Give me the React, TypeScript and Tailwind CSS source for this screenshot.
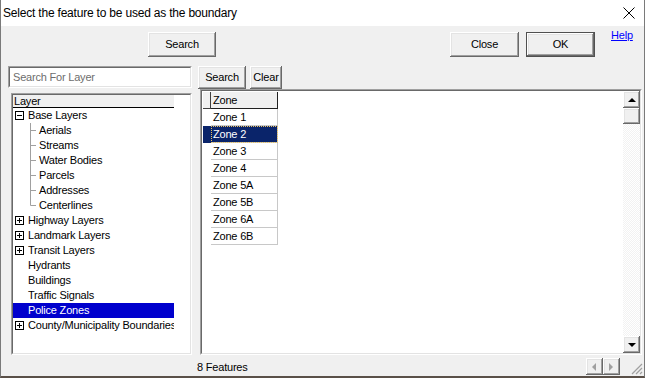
import React from 'react';

type Node = { label: string; exp?: 'plus' | 'minus'; child?: boolean; last?: boolean; selected?: boolean };

const tree: Node[] = [
  { label: 'Base Layers', exp: 'minus' },
  { label: 'Aerials', child: true },
  { label: 'Streams', child: true },
  { label: 'Water Bodies', child: true },
  { label: 'Parcels', child: true },
  { label: 'Addresses', child: true },
  { label: 'Centerlines', child: true, last: true },
  { label: 'Highway Layers', exp: 'plus' },
  { label: 'Landmark Layers', exp: 'plus' },
  { label: 'Transit Layers', exp: 'plus' },
  { label: 'Hydrants' },
  { label: 'Buildings' },
  { label: 'Traffic Signals' },
  { label: 'Police Zones', selected: true },
  { label: 'County/Municipality Boundaries', exp: 'plus' },
];

const zones = ['Zone 1', 'Zone 2', 'Zone 3', 'Zone 4', 'Zone 5A', 'Zone 5B', 'Zone 6A', 'Zone 6B'];

const raised = 'shadow-[inset_-1px_-1px_#696969,inset_1px_1px_#ffffff,inset_-2px_-2px_#a0a0a0,inset_2px_2px_#e3e3e3]';

function Button({ label, className }: { label: string; className: string }) {
  return (
    <div className={`flex items-center justify-center bg-[#f0f0f0] text-[11px] text-black ${raised} ${className}`}>
      {label}
    </div>
  );
}

function Sunken({ className, children }: { className: string; children: React.ReactNode }) {
  return (
    <div className={`border border-t-[#a0a0a0] border-l-[#a0a0a0] border-r-white border-b-white ${className}`}>
      <div className="h-full w-full border border-t-[#696969] border-l-[#696969] border-r-[#e3e3e3] border-b-[#e3e3e3] bg-white">
        {children}
      </div>
    </div>
  );
}

function Expander({ kind }: { kind: 'plus' | 'minus' }) {
  return (
    <svg width="9" height="9" viewBox="0 0 9 9" className="shrink-0">
      <rect x="0.5" y="0.5" width="8" height="8" fill="white" stroke="#000" />
      <line x1="2" y1="4.5" x2="7" y2="4.5" stroke="#000" />
      {kind === 'plus' && <line x1="4.5" y1="2" x2="4.5" y2="7" stroke="#000" />}
    </svg>
  );
}

function Arrow({ dir, color }: { dir: 'up' | 'down' | 'left' | 'right'; color: string }) {
  const pts = {
    up: '4,1 0,5 8,5',
    down: '0,1 8,1 4,5',
    left: '5,0 5,8 1,4',
    right: '1,0 1,8 5,4',
  }[dir];
  const w = dir === 'up' || dir === 'down' ? 8 : 6;
  const h = dir === 'up' || dir === 'down' ? 6 : 8;
  return (
    <svg width={w} height={h} viewBox={`0 0 ${w} ${h}`}>
      <polygon points={pts} fill={color} />
    </svg>
  );
}

export default function App() {
  return (
    <div className="flex h-[378px] w-[645px] flex-col border-x border-b-2 border-x-[#7a7a7a] border-b-[#5a5048] bg-[#f0f0f0] font-['Liberation_Sans',Arial,sans-serif] tracking-[-0.2px] text-black">
      {/* Title bar */}
      <div className="flex h-[26px] shrink-0 items-center justify-between bg-white pl-[2px] pr-[9px]">
        <span className="text-[12px]">Select the feature to be used as the boundary</span>
        <svg width="12" height="12" viewBox="0 0 12 12">
          <path d="M0.5 0.5 L11.5 11.5 M11.5 0.5 L0.5 11.5" stroke="#000" strokeWidth="1" />
        </svg>
      </div>

      {/* Top buttons */}
      <div className="flex h-[31px] shrink-0 items-start pt-[6px]">
        <Button label="Search" className="ml-[147px] h-[25px] w-[68px]" />
        <Button label="Close" className="ml-[234px] h-[25px] w-[69px]" />
        <div className="ml-[7px] h-[25px] w-[69px] border border-[#505050]">
          <Button label="OK" className="h-full w-full" />
        </div>
        <span className="-mt-[5px] ml-[16px] text-[11px] text-[#0000ff] underline">Help</span>
      </div>

      {/* Main */}
      <div className="mt-[9px] flex h-[289px] shrink-0">
        <div className="ml-[7px] flex w-[184px] flex-col">
          <Sunken className="h-[22px] w-[184px]">
            <div className="flex h-full items-center pl-[3px] text-[11px] text-[#6d6d6d]">Search For Layer</div>
          </Sunken>
          <Sunken className="ml-[3px] mt-[5px] h-[262px] w-[181px]">
            <div className="w-[161px] overflow-hidden">
              <div className="h-[13px] border-b border-black bg-[#f0f0f0] pl-[1px] text-[11px] leading-[13px]">Layer</div>
              {tree.map((n) => (
                <div
                  key={n.label}
                  className={`flex h-[15px] items-center whitespace-nowrap text-[11px] ${n.selected ? 'bg-[#0000cd] text-white' : ''}`}
                >
                  {n.exp ? (
                    <>
                      <div className="ml-[2px] mr-[4px]">
                        <Expander kind={n.exp} />
                      </div>
                      <span>{n.label}</span>
                    </>
                  ) : n.child ? (
                    <>
                      <svg width="26" height="15" viewBox="0 0 26 15" className="shrink-0">
                        <line x1="17.5" y1="0" x2="17.5" y2={n.last ? 7.5 : 15} stroke="#a0a0a0" />
                        <line x1="17.5" y1="7.5" x2="23" y2="7.5" stroke="#a0a0a0" />
                      </svg>
                      <span>{n.label}</span>
                    </>
                  ) : (
                    <span className="pl-[15px]">{n.label}</span>
                  )}
                </div>
              ))}
            </div>
          </Sunken>
        </div>

        <div className="ml-[6px] flex flex-col">
          <div className="flex h-[23px]">
            <Button label="Search" className="h-[23px] w-[48px]" />
            <Button label="Clear" className="ml-[4px] h-[23px] w-[32px]" />
          </div>
          <Sunken className="ml-[2px] h-[266px] w-[442px]">
            <div className="flex h-full">
              <div className="flex-1 pl-[1px] pt-[1px] text-[11px]">
                <div className="flex h-[17px]">
                  <div className="w-[8px] border-b border-r border-[#404040] bg-[#f0f0f0]" />
                  <div className="w-[67px] border-b border-r border-[#202020] bg-[#f0f0f0] pl-[2px] leading-[16px]">Zone</div>
                </div>
                {zones.map((z) => {
                  const sel = z === 'Zone 2';
                  return (
                    <div key={z} className="flex h-[17px]">
                      <div className={`w-[8px] ${sel ? 'bg-[#0a246a]' : 'bg-white'}`} />
                      <div
                        className={`w-[67px] border-b border-r border-[#c8c8c8] leading-[16px] ${
                          sel ? 'bg-[#0a246a] text-white outline-1 -outline-offset-1 outline-dotted outline-[#e8c060]' : ''
                        } pl-[2px]`}
                      >
                        {z}
                      </div>
                    </div>
                  );
                })}
              </div>
              <div className="flex w-[17px] flex-col">
                <div className={`flex h-[17px] items-center justify-center bg-[#f0f0f0] ${raised}`}>
                  <Arrow dir="up" color="#000" />
                </div>
                <div className={`h-[16px] bg-[#f0f0f0] ${raised}`} />
                <div className="flex-1 bg-[repeating-conic-gradient(#ffffff_0_25%,#f2f2f2_0_50%)] bg-[length:2px_2px]" />
                <div className={`flex h-[17px] items-center justify-center bg-[#f0f0f0] ${raised}`}>
                  <Arrow dir="down" color="#000" />
                </div>
              </div>
            </div>
          </Sunken>
        </div>
      </div>

      {/* Status */}
      <div className="flex flex-1 items-start">
        <span className="ml-[196px] mt-[4px] text-[11px]">8 Features</span>
        <div className="ml-[338px] mt-[3px] flex">
          <div className={`flex h-[17px] w-[17px] items-center justify-center bg-[#f0f0f0] ${raised}`}>
            <Arrow dir="left" color="#a0a0a0" />
          </div>
          <div className={`flex h-[17px] w-[17px] items-center justify-center bg-[#f0f0f0] ${raised}`}>
            <Arrow dir="right" color="#a0a0a0" />
          </div>
        </div>
        <svg width="13" height="13" viewBox="0 0 13 13" className="ml-[10px] mt-[7px]">
          <path d="M12 2 L2 12 M12 6 L6 12 M12 10 L10 12" stroke="#a0a0a0" strokeWidth="1.2" />
        </svg>
      </div>
    </div>
  );
}
